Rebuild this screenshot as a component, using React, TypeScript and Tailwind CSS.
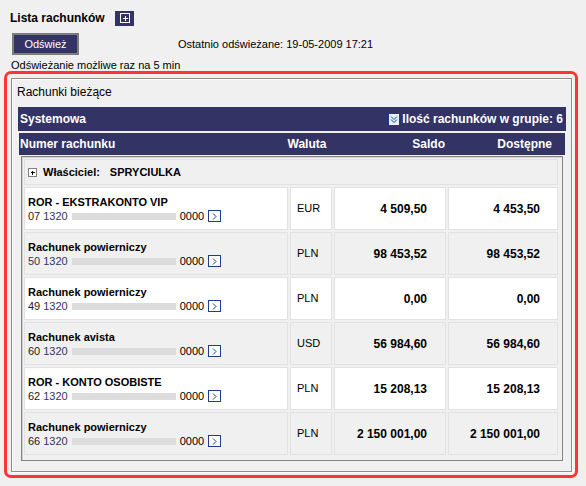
import React from "react";

type Account = {
  name: string;
  prefix: string;
  prefixBlue?: boolean;
  currency: string;
  balance: string;
  available: string;
};

const accounts: Account[] = [
  { name: "ROR - EKSTRAKONTO VIP", prefix: "07", currency: "EUR", balance: "4 509,50", available: "4 453,50" },
  { name: "Rachunek powierniczy", prefix: "50", prefixBlue: true, currency: "PLN", balance: "98 453,52", available: "98 453,52" },
  { name: "Rachunek powierniczy", prefix: "49", currency: "PLN", balance: "0,00", available: "0,00" },
  { name: "Rachunek avista", prefix: "60", currency: "USD", balance: "56 984,60", available: "56 984,60" },
  { name: "ROR - KONTO OSOBISTE", prefix: "62", currency: "PLN", balance: "15 208,13", available: "15 208,13" },
  { name: "Rachunek powierniczy", prefix: "66", currency: "PLN", balance: "2 150 001,00", available: "2 150 001,00" },
];

function ExpandIcon() {
  return (
    <svg width="19" height="15" viewBox="0 0 19 15" shapeRendering="crispEdges">
      <rect width="19" height="15" fill="#333366" />
      <rect x="5.5" y="2.5" width="9" height="9" fill="none" stroke="#fff" />
      <path d="M10 4.5V9.5M7.5 7H12.5" stroke="#fff" />
    </svg>
  );
}

function GroupIcon() {
  return (
    <svg width="12" height="13" viewBox="0 0 12 13" shapeRendering="crispEdges">
      <rect x="0.5" y="0.5" width="11" height="12" fill="#e8eefc" stroke="#1c3c94" />
      <path d="M3 3.5L6 6.5L9 3.5M3 6.5L6 9.5L9 6.5" fill="none" stroke="#1c3c94" shapeRendering="auto" />
    </svg>
  );
}

function OwnerToggle() {
  return (
    <svg width="9" height="9" viewBox="0 0 9 9" shapeRendering="crispEdges">
      <rect x="0.5" y="0.5" width="8" height="8" fill="#fff" stroke="#808080" />
      <path d="M4.5 2.5V6.5M2.5 4.5H6.5" stroke="#000" />
    </svg>
  );
}

function GoArrow() {
  return (
    <span className="ml-[4px] flex h-[12px] w-[13px] items-center justify-center border border-[#1f3d8f] bg-white">
      <svg width="5" height="7" viewBox="0 0 5 7">
        <path d="M1 0.5L4 3.5L1 6.5" fill="none" stroke="#1f3d8f" />
      </svg>
    </span>
  );
}

export default function App() {
  return (
    <div className="h-[486px] w-[586px] overflow-hidden bg-[#f0f0f0] font-['Liberation_Sans',Arial,sans-serif] text-[11px] text-black">
      {/* naglowek */}
      <div className="ml-[10px] mt-[11px] flex h-[14px] items-center">
        <span className="text-[12px] font-bold leading-[14px]">Lista rachunków</span>
        <span className="ml-[10px] flex">
          <ExpandIcon />
        </span>
      </div>

      <div className="mt-[8px] flex h-[22px] items-center">
        <button className="ml-[12px] h-[22px] w-[67px] border-2 border-[#7c7c7c] bg-[#333366] text-[11px] leading-[18px] text-white">
          Odśwież
        </button>
        <span className="ml-[99px] leading-[14px]">Ostatnio odświeżane: 19-05-2009 17:21</span>
      </div>
      <div className="ml-[11px] mt-[4px] h-[12px] leading-[12px]">Odświeżanie możliwe raz na 5 min</div>

      {/* ramka */}
      <div className="ml-[4px] h-[407px] w-[574px] rounded-[7px] border-[3px] border-[#ff3535]">
        <div className="ml-[4px] mt-[4px] h-[394px] w-[561px] border border-[#8c8c8c] shadow-[1px_1px_0_#ffffff,inset_1px_1px_0_#ffffff]">
          <div className="ml-[5px] mt-[6px] text-[12px] leading-[14px]">Rachunki bieżące</div>

          <div className="ml-[6px] mt-[8px] flex h-[24px] w-[548px] items-center justify-between bg-[#333366] pl-[2px] pr-[3px] text-[12px] font-bold text-white">
            <span>Systemowa</span>
            <span className="flex items-center gap-[2px]">
              <GroupIcon />
              Ilość rachunków w grupie: 6
            </span>
          </div>

          <div className="ml-[7px] mt-[2px] grid h-[22px] w-[546px] grid-cols-[266px_44px_118px_107px_1fr] items-center bg-[#333366] text-[12px] font-bold text-white">
            <span className="pl-[1px]">Numer rachunku</span>
            <span className="text-center">Waluta</span>
            <span className="pr-[2px] text-right">Saldo</span>
            <span className="pr-[2px] text-right">Dostępne</span>
            <span />
          </div>

          <div className="ml-[9px] mt-[1px] h-[305px] w-[542px] border border-[#858585] pl-[2px] pt-[2px] shadow-[inset_1px_1px_0_#d0d0d0]">
            <div className="grid grid-cols-[264px_42px_112px_110px] gap-[2px]">
              <div className="col-span-4 flex h-[26px] items-center border border-[#e0e0e0] bg-[#f0f0f0] pl-[3px] font-bold">
                <OwnerToggle />
                <span className="ml-[6px]">Właściciel:</span>
                <span className="ml-[10px]">SPRYCIULKA</span>
              </div>

              {accounts.map((a, i) => {
                const bg = i % 2 === 0 ? "bg-white" : "bg-[#f0f0f0]";
                return (
                  <React.Fragment key={i}>
                    <div className={`flex h-[43px] flex-col justify-center border border-[#e2e2e2] pl-[3px] pt-[1px] ${bg}`}>
                      <div className="h-[14px] font-bold leading-[14px]">{a.name}</div>
                      <div className="flex h-[14px] items-center leading-[14px]">
                        <span className={a.prefixBlue ? "text-[#333366]" : "text-[#222]"}>{a.prefix}</span>
                        <span className="ml-[3px] text-[#333366]">1320</span>
                        <span className="ml-[4px] h-[7px] w-[104px] bg-[#dcdcdc]" />
                        <span className="ml-[4px]">0000</span>
                        <GoArrow />
                      </div>
                    </div>
                    <div className={`flex h-[43px] items-center border border-[#e2e2e2] pl-[6px] ${bg}`}>
                      {a.currency}
                    </div>
                    <div className={`flex h-[43px] items-center justify-end border border-[#e2e2e2] pr-[18px] text-[12px] font-bold ${bg}`}>
                      {a.balance}
                    </div>
                    <div className={`flex h-[43px] items-center justify-end border border-[#e2e2e2] pr-[17px] text-[12px] font-bold ${bg}`}>
                      {a.available}
                    </div>
                  </React.Fragment>
                );
              })}
            </div>
          </div>
        </div>
      </div>
    </div>
  );
}
